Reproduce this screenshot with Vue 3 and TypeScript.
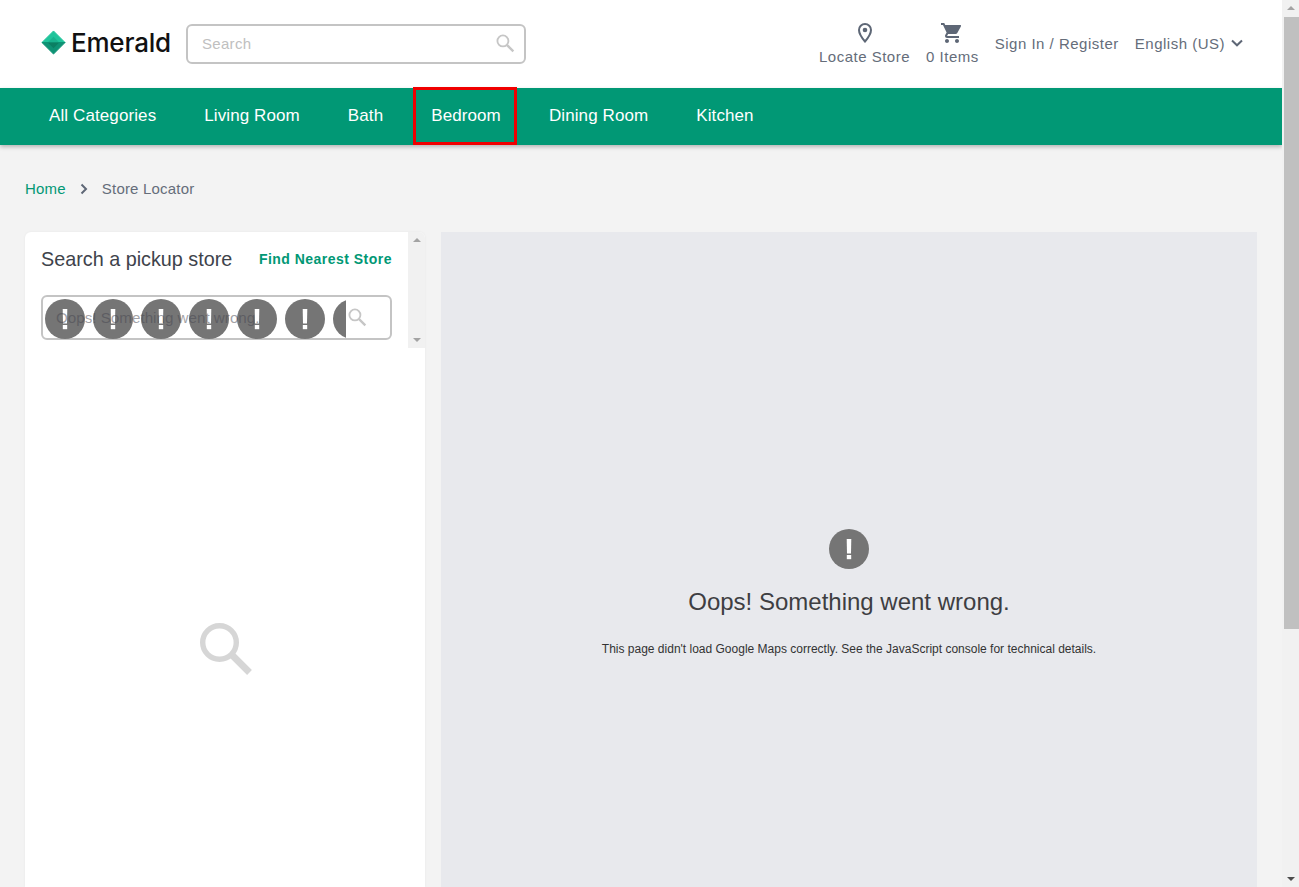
<template>
  <div class="app">
    <div class="page">
      <header class="topbar">
        <div class="logo">
          <svg class="logo__mark" viewBox="0 0 26 26" width="25" height="25" aria-hidden="true">
            <path d="M13 1 25 13H1Z" fill="#20c49b" stroke="#20c49b" stroke-linejoin="round" />
            <path d="M1 13H25L13 25Z" fill="#0e9274" stroke="#0e9274" stroke-linejoin="round" />
            <path d="M7 13 13 7 19 13Z" fill="#19b28e" />
            <path d="M7 13H19L13 19Z" fill="#0b7f63" />
          </svg>
          <span class="logo__text">Emerald</span>
        </div>
        <div class="search">
          <span class="search__placeholder">Search</span>
          <svg class="search__icon" viewBox="0 0 24 24" width="20" height="20" aria-hidden="true">
            <circle cx="9.500" cy="9.500" r="6.600" fill="none" stroke="#c6c6c6" stroke-width="2.200" />
            <path d="M14.500 14.500 22 22" stroke="#c6c6c6" stroke-width="2.800" />
          </svg>
        </div>
        <nav class="actions">
          <div class="action action--stack">
            <svg viewBox="0 0 20 24" width="20" height="24" aria-hidden="true">
              <path d="M10 3a6 6 0 0 0-6 6C4 13.500 10 20.500 10 20.500S16 13.500 16 9a6 6 0 0 0-6-6Z" fill="none" stroke="#5e6776" stroke-width="2" />
              <circle cx="10" cy="9" r="2.300" fill="#5e6776" />
            </svg>
            <span>Locate Store</span>
          </div>
          <div class="action action--stack">
            <svg viewBox="0 0 24 24" width="24" height="24" aria-hidden="true">
              <path fill="#5e6776" d="M7 18c-1.100 0-2 .9-2 2s.9 2 2 2 2-.9 2-2-.9-2-2-2ZM1 2v2h2l3.600 7.590-1.350 2.450c-.16.280-.25.610-.25.960 0 1.100.9 2 2 2h12v-2H7.420a.25.25 0 0 1-.25-.25l.03-.12L8.100 13h7.450c.75 0 1.410-.41 1.750-1.030l3.580-6.490A1 1 0 0 0 20 4H5.210l-.94-2H1Zm16 16c-1.100 0-2 .9-2 2s.9 2 2 2 2-.9 2-2-.9-2-2-2Z" />
            </svg>
            <span>0 Items</span>
          </div>
          <div class="action">Sign In / Register</div>
          <div class="action action--lang">
            English (US)
            <svg viewBox="0 0 12 8" width="12" height="8" aria-hidden="true">
              <path d="M1 1.500 6 6.300 11 1.500" fill="none" stroke="#5e6776" stroke-width="2" />
            </svg>
          </div>
        </nav>
      </header>

      <div class="menu">
        <a
          v-for="item in menuItems"
          :key="item"
          class="menu__item"
          :class="{ 'menu__item--marked': item === 'Bedroom' }"
        >{{ item }}</a>
      </div>

      <div class="crumbs">
        <span class="crumbs__home">Home</span>
        <svg viewBox="0 0 8 12" width="8" height="12" aria-hidden="true">
          <path d="M1.500 1.500 6 6l-4.500 4.500" fill="none" stroke="#5e6776" stroke-width="2" />
        </svg>
        <span>Store Locator</span>
      </div>

      <main class="locator">
        <aside class="panel">
          <div class="panel__top">
            <div class="panel__form">
              <div class="panel__head">
                <h2>Search a pickup store</h2>
                <a class="panel__near">Find Nearest Store</a>
              </div>
              <div class="store-input">
                <svg class="store-input__icon" viewBox="0 0 24 24" width="20" height="20" aria-hidden="true">
                  <circle cx="9.500" cy="9.500" r="6.600" fill="none" stroke="#c6c6c6" stroke-width="2.200" />
                  <path d="M14.500 14.500 22 22" stroke="#c6c6c6" stroke-width="2.800" />
                </svg>
                <div class="store-input__errors">
                  <svg v-for="n in 7" :key="n" viewBox="0 0 40 40" width="40" height="40" aria-hidden="true">
                    <circle cx="20" cy="20" r="20" fill="#757575" />
                    <path d="M17.700 10h4.600l-.3 14.500h-4z" fill="#fff" />
                    <rect x="17.800" y="26" width="4.400" height="4.200" fill="#fff" />
                  </svg>
                </div>
                <span class="store-input__text">Oops! Something went wrong.</span>
              </div>
            </div>
            <div class="mini-scroll">
              <span class="arrow arrow--up arrow--light"></span>
              <span class="arrow arrow--down arrow--light"></span>
            </div>
          </div>
          <div class="panel__empty">
            <svg viewBox="0 0 54 54" width="54" height="54" aria-hidden="true">
              <circle cx="19.500" cy="19.500" r="16.800" fill="none" stroke="#d6d6d6" stroke-width="5.400" />
              <path d="M31 31 49.500 49.500" stroke="#d6d6d6" stroke-width="6.800" />
            </svg>
          </div>
        </aside>

        <section class="map">
          <svg viewBox="0 0 40 40" width="40" height="40" aria-hidden="true">
            <circle cx="20" cy="20" r="20" fill="#757575" />
            <path d="M17.700 10h4.600l-.3 14.500h-4z" fill="#fff" />
            <rect x="17.800" y="26" width="4.400" height="4.200" fill="#fff" />
          </svg>
          <h3>Oops! Something went wrong.</h3>
          <p>This page didn't load Google Maps correctly. See the JavaScript console for technical details.</p>
        </section>
      </main>
    </div>

    <div class="scrollbar">
      <span class="arrow arrow--up arrow--light"></span>
      <div class="scrollbar__thumb"></div>
      <span class="arrow arrow--down"></span>
    </div>
  </div>
</template>

<script setup lang="ts">
const menuItems: string[] = ['All Categories', 'Living Room', 'Bath', 'Bedroom', 'Dining Room', 'Kitchen']
</script>

<style>
html,
body {
  margin: 0;
  overflow: hidden;
}
</style>

<style scoped>
.app {
  display: flex;
  height: 887px;
  overflow: hidden;
  background: #f3f3f3;
  font-family: "Liberation Sans", Arial, sans-serif;
}

.page {
  flex: 1;
  min-width: 0;
}

.topbar {
  height: 88px;
  box-sizing: border-box;
  display: flex;
  align-items: center;
  background: #fff;
  padding: 0 39px 0 41px;
}

.logo {
  display: flex;
  align-items: center;
  gap: 5px;
  width: 145px;
  margin-bottom: 4px;
}

.logo__mark {
  flex: none;
}

.logo__text {
  font-family: Inter, sans-serif;
  font-size: 26px;
  font-weight: 500;
  letter-spacing: -0.2px;
  color: #111;
  margin-top: 1px;
}

.search {
  width: 340px;
  height: 40px;
  box-sizing: border-box;
  border: 2px solid #c4c4c4;
  border-radius: 6px;
  display: flex;
  align-items: center;
  justify-content: space-between;
  padding: 0 9px 2px 14px;
}

.search__placeholder {
  font-size: 15px;
  letter-spacing: 0.3px;
  color: #c0c0c0;
}

.actions {
  margin-left: auto;
  margin-bottom: 2px;
  display: flex;
  align-items: center;
  gap: 16px;
}

.action {
  font-size: 15px;
  line-height: 17px;
  letter-spacing: 0.5px;
  color: #656d7a;
  white-space: nowrap;
}

.action--stack {
  display: flex;
  flex-direction: column;
  align-items: center;
  gap: 3px;
}

.action--stack svg {
  display: block;
}

.action--lang {
  display: flex;
  align-items: center;
  gap: 6px;
}

.menu {
  position: relative;
  height: 57px;
  display: flex;
  align-items: center;
  padding-left: 25px;
  background: #019875;
  box-shadow: 0 2px 4px rgba(0, 0, 0, 0.25);
}

.menu__item {
  position: relative;
  box-sizing: border-box;
  height: 57px;
  display: flex;
  align-items: center;
  padding: 0 24px 2px;
  font-size: 17px;
  letter-spacing: 0.1px;
  color: #fff;
}

.menu__item--marked::after {
  content: "";
  position: absolute;
  left: 6px;
  right: 8px;
  top: -1px;
  bottom: 0;
  border: 3px solid #f00000;
}

.crumbs {
  height: 87px;
  box-sizing: border-box;
  display: flex;
  align-items: center;
  gap: 14px;
  padding: 0 0 0 25px;
  font-size: 15px;
  letter-spacing: 0.2px;
  color: #656d7a;
}

.crumbs__home {
  color: #019875;
}

.locator {
  display: flex;
  gap: 16px;
  padding: 0 25px;
}

.panel {
  width: 400px;
  height: 655px;
  flex: none;
  display: flex;
  flex-direction: column;
  background: #fff;
  border-radius: 6px 6px 0 0;
  box-shadow: 0 0 3px rgba(0, 0, 0, 0.05);
}

.panel__top {
  display: flex;
  height: 116px;
  flex: none;
}

.panel__form {
  flex: 1;
  box-sizing: border-box;
  padding: 15px 16px 0;
}

.panel__head {
  display: flex;
  align-items: center;
  justify-content: space-between;
  height: 24px;
  width: 351px;
}

.panel__head h2 {
  margin: 0;
  font-size: 19.800px;
  font-weight: 400;
  color: #3e434b;
}

.panel__near {
  font-size: 14px;
  font-weight: 700;
  letter-spacing: 0.48px;
  color: #019875;
}

.store-input {
  position: relative;
  width: 351px;
  height: 45px;
  box-sizing: border-box;
  margin-top: 24px;
  border: 2px solid #c4c4c4;
  border-radius: 6px;
  background: #fff;
}

.store-input__text {
  position: absolute;
  left: 13px;
  top: 12px;
  font-size: 15.200px;
  line-height: 18px;
  color: rgba(70, 70, 80, 0.5);
  white-space: nowrap;
}

.store-input__icon {
  position: absolute;
  left: 304px;
  top: 10px;
}

.store-input__errors {
  position: absolute;
  left: 2px;
  top: 2px;
  width: 301px;
  height: 40px;
  overflow: hidden;
  display: flex;
  gap: 8px;
}

.store-input__errors svg {
  flex: none;
}

.mini-scroll {
  position: relative;
  width: 17px;
  flex: none;
  background: #f1f1f1;
  border-top-right-radius: 6px;
}

.arrow {
  position: absolute;
  left: 50%;
  margin-left: -4px;
  width: 0;
  height: 0;
  border-left: 4px solid transparent;
  border-right: 4px solid transparent;
}

.arrow--up {
  top: 6px;
  border-bottom: 4px solid #4d4d4d;
}

.arrow--down {
  bottom: 6px;
  border-top: 4px solid #4d4d4d;
}

.arrow--up.arrow--light {
  border-bottom-color: #a3a3a3;
}

.arrow--down.arrow--light {
  border-top-color: #a3a3a3;
}

.panel__empty {
  flex: 1;
  display: flex;
  justify-content: center;
  padding: 275px 0 0 4px;
}

.map {
  flex: 1;
  height: 655px;
  box-sizing: border-box;
  display: flex;
  flex-direction: column;
  align-items: center;
  padding-top: 297px;
  background: #e8e9ed;
}

.map h3 {
  margin: 18px 0 0;
  font-size: 24px;
  font-weight: 400;
  line-height: 30px;
  color: #3e3e42;
}

.map p {
  margin: 25px 0 0;
  font-size: 12px;
  line-height: 15px;
  color: #333;
}

.scrollbar {
  position: relative;
  width: 17px;
  flex: none;
  background: #f1f1f1;
}

.scrollbar__thumb {
  position: absolute;
  left: 2px;
  right: 0;
  top: 17px;
  height: 612px;
  background: #c0c0c0;
}
</style>
